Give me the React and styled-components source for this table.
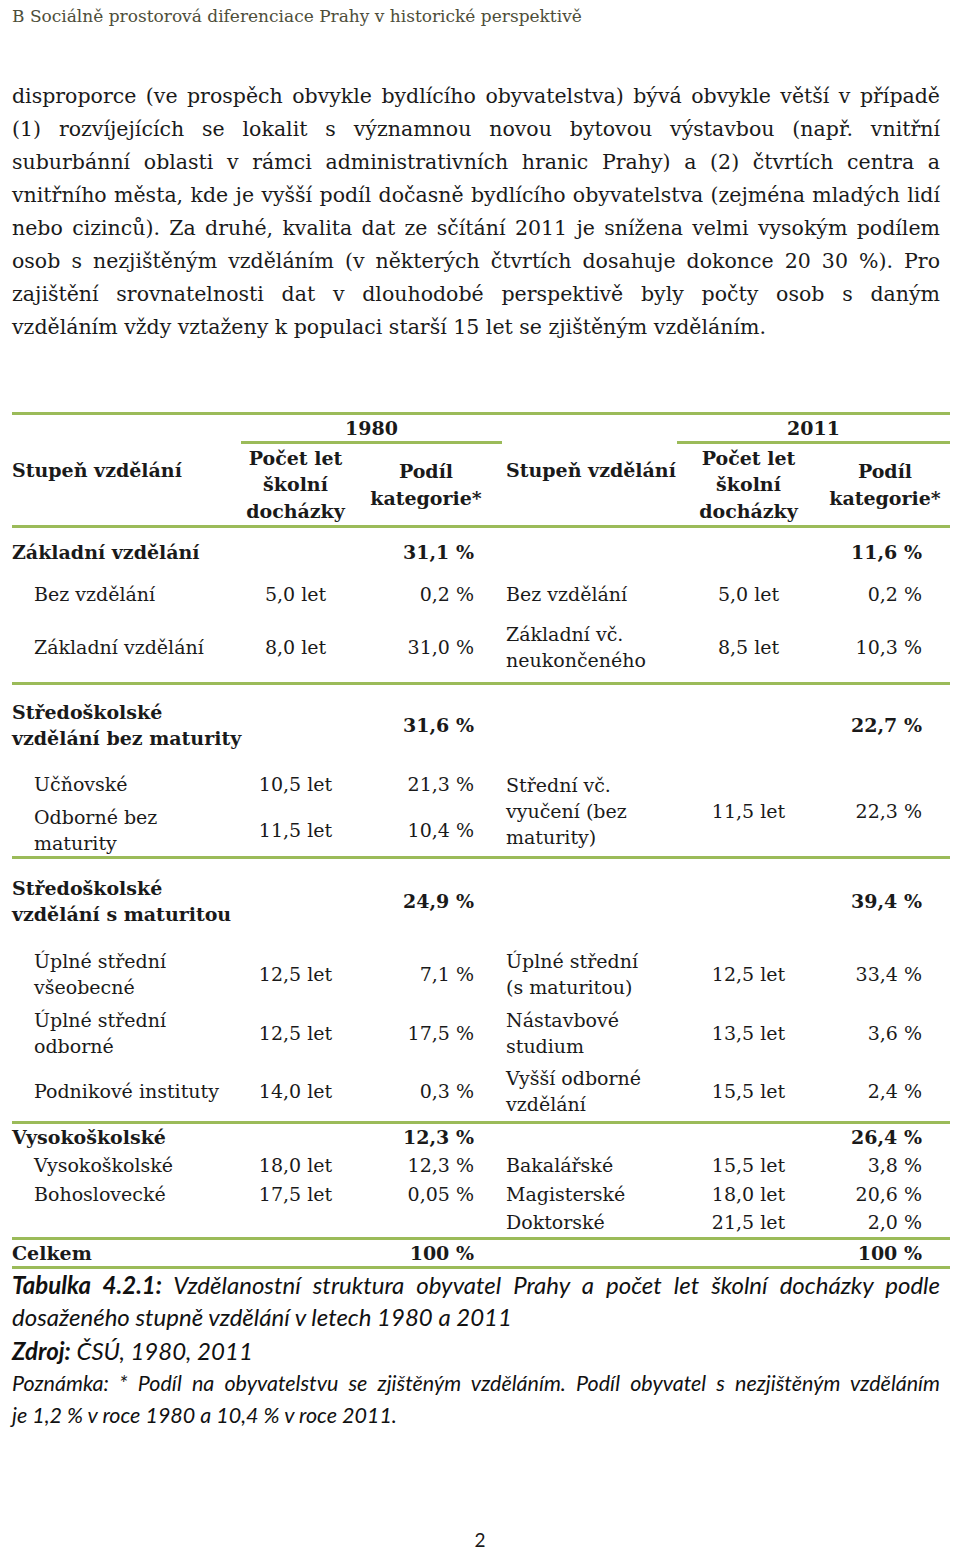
import React from 'react'
import styled, { createGlobalStyle } from 'styled-components'

const GREEN = '#9bbb59'
const COLS = '229px 109px 152px 175px 143px 130px'

const GlobalStyle = createGlobalStyle`
  html, body {
    margin: 0;
    padding: 0;
    background: #fff;
  }
`

const Page = styled.div`
  width: 960px;
  min-height: 1549px;
  display: flex;
  flex-direction: column;
  font-family: "DejaVu Serif", serif;
  color: #1a1a1a;
`

const RunningHead = styled.div`
  padding-left: 12px;
  font-size: 17px;
  line-height: 32px;
  color: #4e4e3a;
`

const Paragraph = styled.div`
  margin-top: 48px;
  padding: 0 20px 0 12px;
  font-size: 20.5px;
  line-height: 33px;
`

const Line = styled.span`
  display: block;
  text-align: ${p => (p.$last ? 'left' : 'justify')};
  text-align-last: ${p => (p.$last ? 'left' : 'justify')};
`

const Table = styled.div`
  margin: 68px 10px 0 12px;
  border-top: 3px solid ${GREEN};
`

const Group = styled.div`
  display: grid;
  grid-template-columns: ${COLS};
  grid-template-rows: ${p => p.$rows};
  border-bottom: 3px solid ${GREEN};
  font-size: 19px;
  line-height: 26px;
`

const Cell = styled.div`
  display: flex;
  align-items: center;
  justify-content: ${p =>
    p.$align === 'right' ? 'flex-end' : p.$align === 'center' ? 'center' : 'flex-start'};
  text-align: ${p => p.$align || 'left'};
  padding-left: ${p => (p.$indent ? '22px' : p.$pad ? '4px' : '0')};
  padding-right: ${p => (p.$align === 'right' ? '28px' : '0')};
  font-weight: ${p => (p.$bold ? 700 : 400)};
  white-space: nowrap;
  grid-row: ${p => (p.$rowSpan ? `span ${p.$rowSpan}` : 'auto')};
  grid-column: ${p => (p.$colSpan ? `span ${p.$colSpan}` : 'auto')};
`

const HeadCell = styled(Cell)`
  font-weight: 700;
  line-height: 26.5px;
  justify-content: ${p => (p.$align === 'left' ? 'flex-start' : 'center')};
  text-align: ${p => (p.$align === 'left' ? 'left' : 'center')};
  padding-right: 0;
`

const Year = styled(HeadCell)`
  border-bottom: 3px solid ${GREEN};
`

const Caption = styled.div`
  padding: 0 20px 0 12px;
  font-family: Lato, "Liberation Sans", sans-serif;
  font-style: italic;
  font-size: 24px;
  line-height: 32px;
  color: #111;
`

const Source = styled.div`
  margin-top: 2px;
`

const Note = styled.div`
  font-size: 21.5px;
`

const PageNumber = styled.div`
  margin-top: auto;
  text-align: center;
  font-family: Lato, "Liberation Sans", sans-serif;
  font-size: 19px;
  line-height: 18px;
`

const Empty = () => <Cell />

const Head = () => (
  <Group $rows="29px 81px">
    <HeadCell $align="left" $rowSpan={2}>Stupeň vzdělání</HeadCell>
    <Year $colSpan={2}>1980</Year>
    <HeadCell $align="left" $pad $rowSpan={2}>Stupeň vzdělání</HeadCell>
    <Year $colSpan={2}>2011</Year>
    <HeadCell>Počet let<br />školní<br />docházky</HeadCell>
    <HeadCell>Podíl<br />kategorie*</HeadCell>
    <HeadCell>Počet let<br />školní<br />docházky</HeadCell>
    <HeadCell>Podíl<br />kategorie*</HeadCell>
  </Group>
)

export default function App() {
  return (
    <Page>
      <GlobalStyle />
      <RunningHead>B Sociálně prostorová diferenciace Prahy v historické perspektivě</RunningHead>

      <Paragraph>
        <Line>disproporce (ve prospěch obvykle bydlícího obyvatelstva) bývá obvykle větší v případě</Line>
        <Line>(1) rozvíjejících se lokalit s významnou novou bytovou výstavbou (např. vnitřní</Line>
        <Line>suburbánní oblasti v rámci administrativních hranic Prahy) a (2) čtvrtích centra a</Line>
        <Line>vnitřního města, kde je vyšší podíl dočasně bydlícího obyvatelstva (zejména mladých lidí</Line>
        <Line>nebo cizinců). Za druhé, kvalita dat ze sčítání 2011 je snížena velmi vysokým podílem</Line>
        <Line>osob s nezjištěným vzděláním (v některých čtvrtích dosahuje dokonce 20 30 %). Pro</Line>
        <Line>zajištění srovnatelnosti dat v dlouhodobé perspektivě byly počty osob s daným</Line>
        <Line $last>vzděláním vždy vztaženy k populaci starší 15 let se zjištěným vzděláním.</Line>
      </Paragraph>

      <Table>
        <Head />

        <Group $rows="48px 36px 70px">
          <Cell $bold>Základní vzdělání</Cell>
          <Empty />
          <Cell $bold $align="right">31,1 %</Cell>
          <Empty />
          <Empty />
          <Cell $bold $align="right">11,6 %</Cell>

          <Cell $indent>Bez vzdělání</Cell>
          <Cell $align="center">5,0 let</Cell>
          <Cell $align="right">0,2 %</Cell>
          <Cell $pad>Bez vzdělání</Cell>
          <Cell $align="center">5,0 let</Cell>
          <Cell $align="right">0,2 %</Cell>

          <Cell $indent>Základní vzdělání</Cell>
          <Cell $align="center">8,0 let</Cell>
          <Cell $align="right">31,0 %</Cell>
          <Cell $pad>Základní vč.<br />neukončeného</Cell>
          <Cell $align="center">8,5 let</Cell>
          <Cell $align="right">10,3 %</Cell>
        </Group>

        <Group $rows="80px 38px 53px">
          <Cell $bold>Středoškolské<br />vzdělání bez maturity</Cell>
          <Empty />
          <Cell $bold $align="right">31,6 %</Cell>
          <Empty />
          <Empty />
          <Cell $bold $align="right">22,7 %</Cell>

          <Cell $indent>Učňovské</Cell>
          <Cell $align="center">10,5 let</Cell>
          <Cell $align="right">21,3 %</Cell>
          <Cell $pad $rowSpan={2}>Střední vč.<br />vyučení (bez<br />maturity)</Cell>
          <Cell $align="center" $rowSpan={2}>11,5 let</Cell>
          <Cell $align="right" $rowSpan={2}>22,3 %</Cell>

          <Cell $indent>Odborné bez<br />maturity</Cell>
          <Cell $align="center">11,5 let</Cell>
          <Cell $align="right">10,4 %</Cell>
        </Group>

        <Group $rows="84px 62px 56px 60px">
          <Cell $bold>Středoškolské<br />vzdělání s maturitou</Cell>
          <Empty />
          <Cell $bold $align="right">24,9 %</Cell>
          <Empty />
          <Empty />
          <Cell $bold $align="right">39,4 %</Cell>

          <Cell $indent>Úplné střední<br />všeobecné</Cell>
          <Cell $align="center">12,5 let</Cell>
          <Cell $align="right">7,1 %</Cell>
          <Cell $pad>Úplné střední<br />(s maturitou)</Cell>
          <Cell $align="center">12,5 let</Cell>
          <Cell $align="right">33,4 %</Cell>

          <Cell $indent>Úplné střední<br />odborné</Cell>
          <Cell $align="center">12,5 let</Cell>
          <Cell $align="right">17,5 %</Cell>
          <Cell $pad>Nástavbové<br />studium</Cell>
          <Cell $align="center">13,5 let</Cell>
          <Cell $align="right">3,6 %</Cell>

          <Cell $indent>Podnikové instituty</Cell>
          <Cell $align="center">14,0 let</Cell>
          <Cell $align="right">0,3 %</Cell>
          <Cell $pad>Vyšší odborné<br />vzdělání</Cell>
          <Cell $align="center">15,5 let</Cell>
          <Cell $align="right">2,4 %</Cell>
        </Group>

        <Group $rows="26px 30px 27px 30px">
          <Cell $bold>Vysokoškolské</Cell>
          <Empty />
          <Cell $bold $align="right">12,3 %</Cell>
          <Empty />
          <Empty />
          <Cell $bold $align="right">26,4 %</Cell>

          <Cell $indent>Vysokoškolské</Cell>
          <Cell $align="center">18,0 let</Cell>
          <Cell $align="right">12,3 %</Cell>
          <Cell $pad>Bakalářské</Cell>
          <Cell $align="center">15,5 let</Cell>
          <Cell $align="right">3,8 %</Cell>

          <Cell $indent>Bohoslovecké</Cell>
          <Cell $align="center">17,5 let</Cell>
          <Cell $align="right">0,05 %</Cell>
          <Cell $pad>Magisterské</Cell>
          <Cell $align="center">18,0 let</Cell>
          <Cell $align="right">20,6 %</Cell>

          <Empty />
          <Empty />
          <Empty />
          <Cell $pad>Doktorské</Cell>
          <Cell $align="center">21,5 let</Cell>
          <Cell $align="right">2,0 %</Cell>
        </Group>

        <Group $rows="26px">
          <Cell $bold>Celkem</Cell>
          <Empty />
          <Cell $bold $align="right">100 %</Cell>
          <Empty />
          <Empty />
          <Cell $bold $align="right">100 %</Cell>
        </Group>
      </Table>

      <Caption>
        <Line><b>Tabulka 4.2.1:</b> Vzdělanostní struktura obyvatel Prahy a počet let školní docházky podle</Line>
        <Line $last>dosaženého stupně vzdělání v letech 1980 a 2011</Line>
        <Source><b>Zdroj:</b> ČSÚ, 1980, 2011</Source>
        <Note>
          <Line>Poznámka: * Podíl na obyvatelstvu se zjištěným vzděláním. Podíl obyvatel s nezjištěným vzděláním</Line>
          <Line $last>je 1,2 % v roce 1980 a 10,4 % v roce 2011.</Line>
        </Note>
      </Caption>

      <PageNumber>2</PageNumber>
    </Page>
  )
}
